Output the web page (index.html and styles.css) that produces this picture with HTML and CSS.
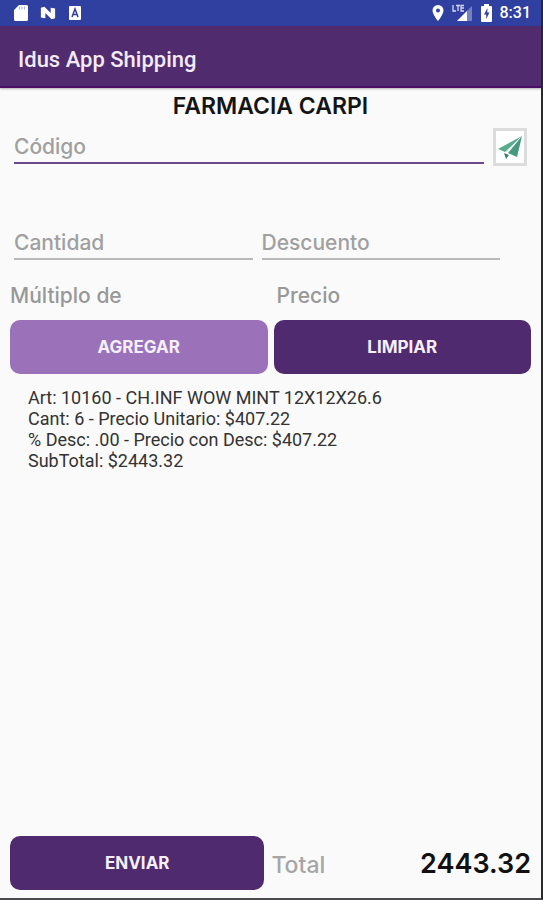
FILE: index.html
```html
<!DOCTYPE html>
<html lang="es">
<head>
  <meta charset="UTF-8">
  <meta name="viewport" content="width=device-width, initial-scale=1.0">
  <title>Idus App Shipping</title>
  <link rel="stylesheet" href="styles.css">
</head>
<body>
  <div class="screen">
    <div class="status-bar">
      <div class="status-left">
        <svg width="14" height="18" viewBox="0 0 14 18">
          <path d="M5 1h7.500a1.500 1.500 0 0 1 1.500 1.500v13a1.500 1.500 0 0 1-1.500 1.500h-11A1.500 1.500 0 0 1 0 15.500V6z" fill="#fff"/>
          <path d="M5.500 2.500v3M8 2.500v3M10.500 2.500v3" stroke="#a9b1de" stroke-width="1"/>
        </svg>
        <svg width="16" height="18" viewBox="0 0 18 18">
          <path d="M1 3l4-1 7 7V3l5 1v11l-4 1-7-7v6l-5-1z" fill="#fff"/>
        </svg>
        <svg width="14" height="18" viewBox="0 0 14 18">
          <rect x="1" y="2" width="12" height="14" rx="1" fill="#fff"/>
          <path d="M4 13l3-8 3 8M5 10.500h4" fill="none" stroke="#3240a0" stroke-width="1.500"/>
        </svg>
      </div>
      <div class="status-right">
        <svg width="12" height="18" viewBox="0 0 12 18">
          <path d="M6 1a5.500 5.500 0 0 0-5.500 5.500C.5 10.500 6 17 6 17s5.500-6.500 5.500-10.500A5.500 5.500 0 0 0 6 1zm0 3.500a2 2 0 1 1 0 4 2 2 0 0 1 0-4z" fill="#fff"/>
        </svg>
        <svg width="21" height="18" viewBox="0 0 21 18">
          <path d="M20 2v15H5z" fill="#7680c4"/>
          <path d="M15 7v10H5z" fill="#fff"/>
          <path d="M1 1v6h3M4 1.500h4M6 1.500V7M12 1.500H9V7h3M9 4h3" fill="none" stroke="#d5d9f0" stroke-width="1.300"/>
        </svg>
        <svg width="11" height="18" viewBox="0 0 11 18">
          <path d="M3 0h5v2h2a1 1 0 0 1 1 1v14a1 1 0 0 1-1 1H1a1 1 0 0 1-1-1V3a1 1 0 0 1 1-1h2z" fill="#fff"/>
          <path d="M6.500 4L3 10.500h2.200V15L8.500 8.500H6.300z" fill="#3240a0"/>
        </svg>
        <span class="clock">8:31</span>
      </div>
    </div>

    <header class="app-bar">
      <h1>Idus App Shipping</h1>
    </header>

    <main class="content">
      <h2 class="client">FARMACIA CARPI</h2>

      <div class="code-row">
        <input type="text" class="field field-active" placeholder="Código" aria-label="Código">
        <button type="button" class="send-button" aria-label="Buscar">
          <svg width="26" height="28" viewBox="0 0 26 28">
            <path d="M25 3L1 16l7 3z" fill="#5aaa8d"/>
            <path d="M25 3L11 20l9 4z" fill="#46997c"/>
            <path d="M7 20l5 2-3 4z" fill="#3d8069"/>
            <path d="M23 5L9 19" stroke="#d8eee6" stroke-width="1"/>
          </svg>
        </button>
      </div>

      <div class="amount-row">
        <input type="text" class="field" placeholder="Cantidad" aria-label="Cantidad">
        <input type="text" class="field" placeholder="Descuento" aria-label="Descuento">
      </div>

      <div class="info-row">
        <span>Múltiplo de</span>
        <span>Precio</span>
      </div>

      <div class="button-row">
        <button type="button" class="button add-button">AGREGAR</button>
        <button type="button" class="button">LIMPIAR</button>
      </div>

      <ul class="items">
        <li>
          Art: 10160 - CH.INF WOW MINT 12X12X26.6<br>
          Cant: 6 - Precio Unitario: $407.22<br>
          % Desc: .00 - Precio con Desc: $407.22<br>
          SubTotal: $2443.32
        </li>
      </ul>
    </main>

    <footer class="footer">
      <button type="button" class="button">ENVIAR</button>
      <div class="total">
        <span class="total-label">Total</span>
        <span class="total-value">2443.32</span>
      </div>
    </footer>
  </div>
</body>
</html>
```

FILE: styles.css
```css
* {
  box-sizing: border-box;
}
body {
  margin: 0;
  font-family: Inter, "Open Sans", sans-serif;
  background-color: #fafafa;
}
.screen {
  display: flex;
  flex-direction: column;
  min-height: 100vh;
  border-right: 2px solid #29292b;
  border-bottom: 2px solid #4a4a4c;
}
.status-bar {
  display: flex;
  justify-content: space-between;
  align-items: center;
  height: 26px;
  padding: 0 10px 0 14px;
  background-color: #3040a0;
  color: #fff;
}
.status-left,
.status-right {
  display: flex;
  align-items: center;
}
.status-left {
  gap: 12px;
}
.status-right {
  gap: 8px;
}
.clock {
  font-family: Roboto, sans-serif;
  font-size: 16px;
  font-weight: 500;
  line-height: 20px;
}
.app-bar {
  display: flex;
  align-items: center;
  height: 62px;
  padding: 6px 18px 0;
  background-color: #502c6e;
  border-bottom: 2px solid #4a0e66;
  box-shadow: 0 1px 2px rgba(0, 0, 0, 0.3);
}
.app-bar h1 {
  margin: 0;
  font-family: Roboto, sans-serif;
  font-size: 22px;
  font-weight: 500;
  color: #f3eaf8;
}
.content {
  flex: 1;
  padding: 4px 10px 0;
}
.client {
  margin: 0;
  font-size: 23px;
  font-weight: 600;
  line-height: 28px;
  text-align: center;
  color: #141414;
}
.code-row {
  display: flex;
  align-items: flex-end;
  gap: 9px;
  margin-top: 8px;
  padding: 0 4px;
}
.field {
  flex: 1;
  min-width: 0;
  height: 34px;
  padding: 0;
  border: none;
  border-bottom: 2px solid #b9b9b9;
  border-radius: 0;
  outline: none;
  background: none;
  font-family: inherit;
  font-size: 21px;
  font-weight: 500;
  color: #222;
}
.field::placeholder {
  color: #a0a0a0;
  opacity: 1;
}
.field-active {
  margin-bottom: 2px;
  border-bottom-color: #6a4a8c;
}
.send-button {
  display: flex;
  align-items: center;
  justify-content: center;
  width: 34px;
  height: 38px;
  padding: 0;
  border: 3px solid #dcdcdc;
  background-color: #fff;
  cursor: pointer;
}
.amount-row {
  display: flex;
  gap: 9px;
  margin-top: 60px;
  padding: 0 31px 0 4px;
}
.info-row {
  display: grid;
  grid-template-columns: 1fr 1fr;
  gap: 12px;
  margin-top: 22px;
  font-size: 21px;
  font-weight: 500;
  line-height: 28px;
  color: #989898;
}
.button-row {
  display: flex;
  gap: 6px;
  margin-top: 10px;
}
.button {
  flex: 1;
  height: 54px;
  padding: 0;
  border: none;
  border-radius: 10px;
  background-color: #4f2a6e;
  color: #f5effa;
  font-family: inherit;
  font-size: 17px;
  font-weight: 700;
  cursor: pointer;
}
.add-button {
  background-color: #9b72b9;
}
.items {
  margin: 13px 0 0;
  padding: 0 18px;
  list-style: none;
  font-family: Roboto, sans-serif;
  font-size: 18px;
  line-height: 21px;
  color: #333;
}
.footer {
  display: grid;
  grid-template-columns: 49fr 50fr;
  align-items: center;
  gap: 7px;
  padding: 0 10px 8px;
}
.total {
  display: flex;
  justify-content: space-between;
  align-items: baseline;
}
.total-label {
  font-size: 23px;
  font-weight: 500;
  color: #a6a6a6;
}
.total-value {
  font-size: 27px;
  font-weight: 600;
  color: #111;
}
```
